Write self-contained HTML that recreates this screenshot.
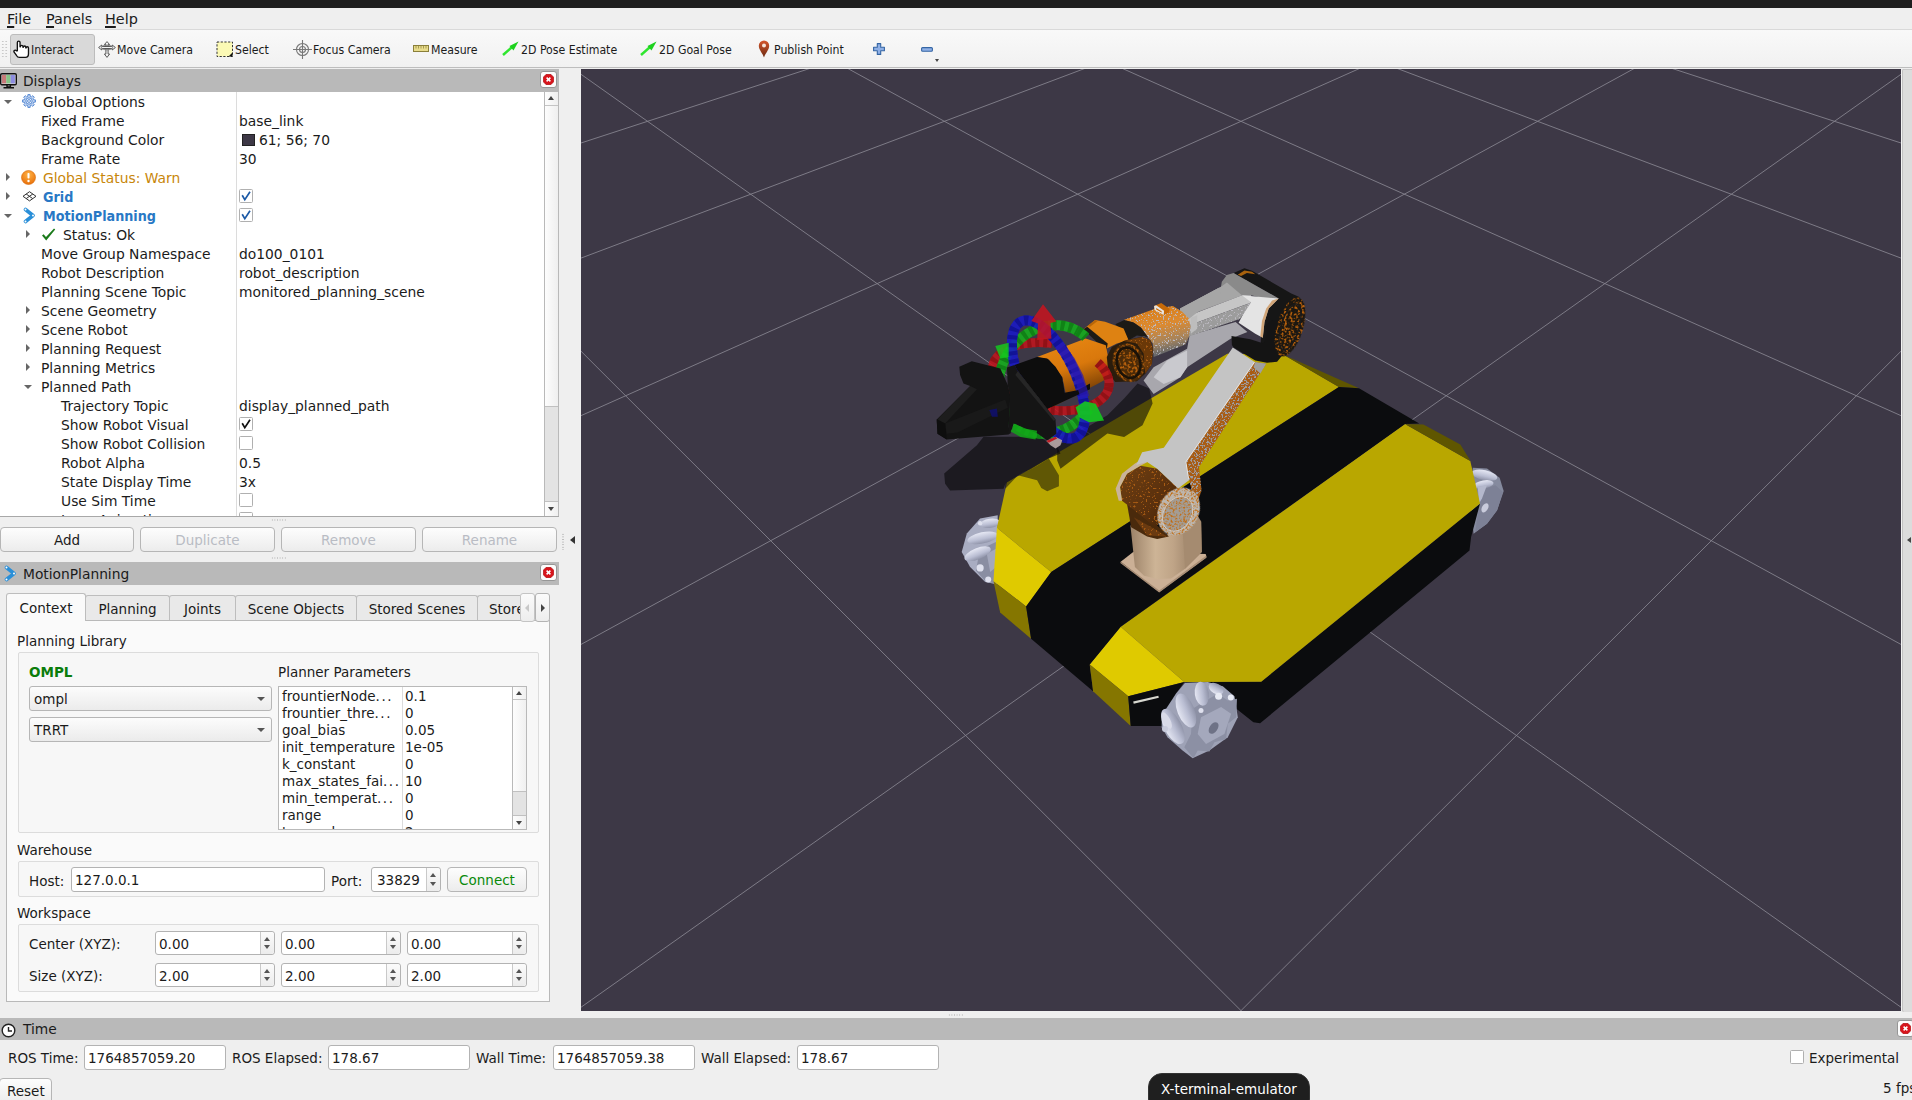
<!DOCTYPE html>
<html lang="en">
<head>
<meta charset="utf-8">
<title>RViz</title>
<style>
*{box-sizing:border-box;margin:0;padding:0}
html,body{width:1912px;height:1100px;overflow:hidden;background:#efefef}
body{position:relative;font-family:"DejaVu Sans","Liberation Sans",sans-serif;font-size:13.5px;color:#1b1b1b;line-height:19px}
.abs{position:absolute}
body>.t{margin-top:1px}
.t{position:absolute;white-space:nowrap;line-height:19px;height:19px}
#topbar{left:0;top:0;width:1912px;height:8px;background:#1f1f1f}
#menubar{left:0;top:8px;width:1912px;height:22px;background:#efefef;border-bottom:1px solid #d9d9d9}
#menubar .t{font-size:14.4px;top:1px;line-height:20px;height:20px}
#menubar u{text-decoration:underline;text-underline-offset:1.500px;text-decoration-thickness:1.700px}
#toolbar{left:0;top:30px;width:1912px;height:38px;background:linear-gradient(#f9f9f9,#f1f1f1);border-bottom:1px solid #bdbdbd}
#toolbar .t{font-family:"DejaVu Sans Condensed","Liberation Sans",sans-serif;font-size:12.2px;top:11px;line-height:19px}
#toolbar svg{position:absolute}
.tbtn{position:absolute;left:10px;top:4px;width:85px;height:31px;background:#d9d9d9;border:1px solid #bcbcbc;border-radius:3px}
.titlebar{position:absolute;background:#b9b9b9;height:23px}
.titlebar .t{top:3px;font-size:13.8px}
.closebtn{position:absolute;width:17px;height:17px;background:#fcfcfc;border:1px solid #969696;border-radius:3px}
.closebtn svg{position:absolute;left:2px;top:2px}
#tree{left:0;top:92px;width:544px;height:424px;background:#fff;overflow:hidden}
#tree .t{font-size:13.85px}
#treeborder{left:0;top:516px;width:559px;height:1px;background:#a8a8a8}
.coldiv{position:absolute;left:236px;top:0;width:1px;height:424px;background:#dcdcdc}
.row{position:absolute;left:0;width:544px;height:19px}
.cb{position:absolute;left:239px;width:14px;height:14px;border:1px solid #b0b0b0;border-radius:1.5px;background:#fff}
.cb svg{position:absolute;left:0;top:0}
.blue{color:#2878c5;font-weight:bold;font-family:"DejaVu Sans Condensed","Liberation Sans",sans-serif;font-size:14.2px!important}
.warn{color:#c8860a}
.vsb{position:absolute;background:linear-gradient(90deg,#fdfdfd,#efefef);border-left:1px solid #b9b9b9;border-right:1px solid #b9b9b9}
.btn{position:absolute;height:25px;border:1px solid #b6b6b6;border-radius:4px;background:linear-gradient(#fdfdfd,#ececec);text-align:center;font-size:13.5px;line-height:25px}
.btn.dis{color:#b9bcc4}
.tab{position:absolute;top:595px;height:25px;border:1px solid #bdbdbd;border-bottom:none;border-radius:3px 3px 0 0;background:#e9e9e9;font-size:13.5px;line-height:26px;text-align:center;white-space:nowrap;overflow:hidden}
.tab.act{top:593px;height:28px;background:#fafafa;line-height:28px;z-index:2}
.gbox{position:absolute;border:1px solid #dcdcdc;border-radius:2px;background:#f7f7f7}
.inp{position:absolute;background:#fff;border:1px solid #b3b3b3;border-radius:3px;font-size:13.5px;line-height:22px;padding:1px 0 0 3px;white-space:nowrap;overflow:hidden}
.combo{position:absolute;border:1px solid #b6b6b6;border-radius:3px;background:linear-gradient(#fcfcfc,#ebebeb);font-size:13.5px;line-height:22px;padding:1px 0 0 4px}
.combo:after{content:"";position:absolute;right:6px;top:10px;border:4px solid transparent;border-top:4px solid #555;border-bottom:none}
.spinbtn{position:absolute;right:0;top:0;width:14px;height:100%;border-left:1px solid #c9c9c9;background:linear-gradient(#fbfbfb,#ececec);border-radius:0 3px 3px 0}
.spinbtn:before{content:"";position:absolute;left:3px;top:5px;border:3.5px solid transparent;border-bottom:4px solid #555;border-top:none}
.spinbtn:after{content:"";position:absolute;left:3px;bottom:5px;border:3.5px solid transparent;border-top:4px solid #555;border-bottom:none}
.green{color:#0a8a0a}
#view{left:581px;top:69px;width:1320px;height:942px;background:#3d3846;overflow:hidden}
</style>
</head>
<body>
<div id="topbar" class="abs"></div>
<div id="menubar" class="abs">
  <span class="t" style="left:7px"><u>F</u>ile</span>
  <span class="t" style="left:46px"><u>P</u>anels</span>
  <span class="t" style="left:105px"><u>H</u>elp</span>
</div>
<div id="toolbar" class="abs">
  <div class="abs" style="left:1px;top:10px;width:7px;height:18px;background-image:radial-gradient(#c9c9c9 0.8px,transparent 1px);background-size:3.500px 3px"></div>
  <div class="tbtn"></div>
  <!-- hand icon -->
  <svg style="left:12.500px;top:9.500px" width="19.500" height="18.400" viewBox="0 0 18 17"><path d="M4 10V2.300a1.250 1.250 0 0 1 2.500 0V6.200h.3a1.200 1.200 0 0 1 2.400 0v.5h.3a1.150 1.150 0 0 1 2.300 0v.6h.3a1.100 1.100 0 0 1 2.200 0V12.600q0 3.400-2.800 3.400H5.900q-1.700 0-2.700-1.700L1 11.300q-.6-1.300.5-1.800 1-.4 1.700.6z" fill="#fff" stroke="#111" stroke-width="1.250" stroke-linejoin="round"/></svg>
  <span class="t" style="left:31px">Interact</span>
  <!-- move camera icon -->
  <svg style="left:98px;top:11px" width="18" height="17" viewBox="0 0 18 17"><g fill="#f4f4f4" stroke="#4a4a4a" stroke-width=".9" stroke-linejoin="round"><path d="M9 .600L11.600 3.600H10.100V13H11.600L9 16.400 6.400 13H7.900V3.600H6.400Z"/><path d="M.600 6.500L3.800 4V5.500H14.200V4L17.400 6.500 14.200 9V7.500H3.800V9Z"/><ellipse cx="9" cy="6.500" rx="5.600" ry="2.300" fill="none" stroke="#777"/></g></svg>
  <span class="t" style="left:117px">Move Camera</span>
  <!-- select icon -->
  <svg style="left:216px;top:11px" width="18" height="17" viewBox="0 0 18 17"><rect x="1" y="1" width="15.500" height="14.500" fill="#fbf9b5" stroke="#333" stroke-width="1" stroke-dasharray="2.200 1.500"/><path d="M16.500 11.500v4h-4z" fill="#111"/></svg>
  <span class="t" style="left:235px">Select</span>
  <!-- focus camera icon -->
  <svg style="left:293px;top:10px" width="19" height="19" viewBox="0 0 19 19"><g fill="none" stroke="#777" stroke-width="1.100"><circle cx="9.500" cy="9.500" r="6"/><circle cx="9.500" cy="9.500" r="3"/><path d="M9.500 0v19M0 9.500h19"/></g></svg>
  <span class="t" style="left:313px">Focus Camera</span>
  <!-- measure icon -->
  <svg style="left:413px;top:15px" width="16" height="8" viewBox="0 0 16 8"><rect x=".5" y=".5" width="15" height="6" fill="#e8dc8c" stroke="#8a7f3a"/><path d="M3 1v2.500M5.500 1v2.500M8 1v2.500M10.500 1v2.500M13 1v2.500" stroke="#8a7f3a" stroke-width=".7"/></svg>
  <span class="t" style="left:431px">Measure</span>
  <!-- 2D pose estimate -->
  <svg style="left:502px;top:11px" width="17" height="15" viewBox="0 0 17 15"><path d="M1 14L9.500 6.500" stroke="#2ee62e" stroke-width="2.400"/><path d="M16.500 0.500L7.500 5l4 4.500z" fill="#1dd11d"/></svg>
  <span class="t" style="left:521px">2D Pose Estimate</span>
  <svg style="left:640px;top:11px" width="17" height="15" viewBox="0 0 17 15"><path d="M1 14L9.500 6.500" stroke="#2ee62e" stroke-width="2.400"/><path d="M16.500 0.500L7.500 5l4 4.500z" fill="#1dd11d"/></svg>
  <span class="t" style="left:659px">2D Goal Pose</span>
  <!-- pin -->
  <svg style="left:758px;top:10px" width="12" height="18" viewBox="0 0 12 18"><defs><linearGradient id="pg" x1="0" y1="0" x2="0" y2="1"><stop offset="0" stop-color="#d4562c"/><stop offset="1" stop-color="#6b2a12"/></linearGradient></defs><path d="M6 17.500C4.500 13 .8 10 .8 5.800a5.200 5.200 0 0 1 10.400 0C11.200 10 7.500 13 6 17.500z" fill="url(#pg)"/><circle cx="6" cy="5.500" r="2" fill="#f6e6dc"/></svg>
  <span class="t" style="left:774px">Publish Point</span>
  <!-- plus / minus -->
  <svg style="left:873px;top:13px" width="12" height="12" viewBox="0 0 12 12"><path d="M4.300 .600h3.400v3.700h3.700v3.400H7.700v3.700H4.300V7.700H.600V4.300h3.700z" fill="#8fb0e6" stroke="#3465a4" stroke-width="1.100" stroke-linejoin="round"/></svg>
  <svg style="left:921px;top:17px" width="12" height="5" viewBox="0 0 12 5"><rect x=".600" y=".600" width="10.800" height="3.600" rx="1" fill="#8fb0e6" stroke="#3465a4" stroke-width="1.100"/></svg>
  <div class="abs" style="left:935px;top:29px;border:2.500px solid transparent;border-top:3px solid #444;border-bottom:none"></div>
</div>

<!-- Displays panel -->
<div class="titlebar" style="left:0;top:69px;width:559px">
  <svg class="abs" style="left:0;top:4px" width="18" height="16" viewBox="0 0 18 16"><rect x=".7" y=".7" width="15.600" height="11" rx="1.200" fill="#ddd" stroke="#111" stroke-width="1.400"/><rect x="2" y="2" width="4.300" height="8.400" fill="#c87a7a"/><rect x="6.300" y="2" width="4.300" height="8.400" fill="#86c486"/><rect x="10.600" y="2" width="4.300" height="8.400" fill="#8d8de0"/><path d="M7 12v2h3.400v-2M3.500 14.700h10.500" stroke="#111" stroke-width="1.400" fill="none"/></svg>
  <span class="t" style="left:23px">Displays</span>
  <div class="closebtn" style="left:540px;top:2px"><svg width="11" height="11" viewBox="0 0 11 11"><path d="M3.200 .3h4.600l2.900 2.900v4.600l-2.900 2.900H3.200L.3 7.800V3.200z" fill="#d8141c" stroke="#a40000" stroke-width=".6"/><path d="M3.600 3.600l3.800 3.800M7.400 3.600L3.600 7.400" stroke="#fff" stroke-width="1.500"/></svg></div>
</div>
<div id="tree" class="abs">
<div class="coldiv"></div>
<div class="row" style="top:0px"><div class="abs" style="left:4px;top:8px;border:4px solid transparent;border-top:4.500px solid #666;border-bottom:none"></div><svg class="abs" style="left:22px;top:2px" width="14" height="14" viewBox="0 0 14 14"><path d="M13.40 5.88 L13.40 8.12 L11.76 8.14 L11.18 9.56 L12.32 10.74 L10.74 12.32 L9.56 11.18 L8.14 11.76 L8.12 13.40 L5.88 13.40 L5.86 11.76 L4.44 11.18 L3.26 12.32 L1.68 10.74 L2.82 9.56 L2.24 8.14 L0.60 8.12 L0.60 5.88 L2.24 5.86 L2.82 4.44 L1.68 3.26 L3.26 1.68 L4.44 2.82 L5.86 2.24 L5.88 0.60 L8.12 0.60 L8.14 2.24 L9.56 2.82 L10.74 1.68 L12.32 3.26 L11.18 4.44 L11.76 5.86Z" fill="#c3d6f3" stroke="#4a80cf" stroke-width="0.9" stroke-linejoin="round"/><circle cx="7" cy="7" r="3.200" fill="#eaf1fb" stroke="#4a80cf" stroke-width="0.9"/><circle cx="7" cy="7" r="1.400" fill="#fff" stroke="#4a80cf" stroke-width="0.9"/></svg><span class="t" style="left:43px;top:1px">Global Options</span></div>
<div class="row" style="top:19px"><span class="t" style="left:41px;top:1px">Fixed Frame</span><span class="t" style="left:239px;top:1px">base_link</span></div>
<div class="row" style="top:38px"><span class="t" style="left:41px;top:1px">Background Color</span><div class="abs" style="left:242px;top:4px;width:13px;height:12px;background:#3d3846;border:1px solid #222"></div><span class="t" style="left:259px;top:1px">61; 56; 70</span></div>
<div class="row" style="top:57px"><span class="t" style="left:41px;top:1px">Frame Rate</span><span class="t" style="left:239px;top:1px">30</span></div>
<div class="row" style="top:76px"><div class="abs" style="left:6px;top:5px;border:4px solid transparent;border-left:4.500px solid #666;border-right:none"></div><svg class="abs" style="left:21px;top:2px" width="15" height="15" viewBox="0 0 15 15"><defs><radialGradient id="wg" cx=".5" cy=".3" r=".7"><stop offset="0" stop-color="#ffb347"/><stop offset="1" stop-color="#e8700a"/></radialGradient></defs><circle cx="7.500" cy="7.500" r="7" fill="url(#wg)" stroke="#d86a08" stroke-width=".6"/><rect x="6.500" y="3" width="2" height="5.500" rx=".8" fill="#fff"/><circle cx="7.500" cy="11" r="1.200" fill="#fff"/></svg><span class="t warn" style="left:43px;top:1px">Global Status: Warn</span></div>
<div class="row" style="top:95px"><div class="abs" style="left:6px;top:5px;border:4px solid transparent;border-left:4.500px solid #666;border-right:none"></div><svg class="abs" style="left:22px;top:4px" width="15" height="11" viewBox="0 0 15 11"><g fill="none" stroke="#333" stroke-width="1"><path d="M7.500 .7l6.500 4.600-6.500 4.600L1 5.300z"/><path d="M4.200 3l6.500 4.600M10.800 3L4.200 7.600"/></g></svg><span class="t blue" style="left:43px;top:1px">Grid</span><div class="cb" style="top:2px"><svg width="12" height="12" viewBox="0 0 12 12"><path d="M2.200 5.200L4.800 9.600 10 1.800" fill="none" stroke="#1c5aa6" stroke-width="1.700"/></svg></div></div>
<div class="row" style="top:114px"><div class="abs" style="left:4px;top:8px;border:4px solid transparent;border-top:4.500px solid #666;border-bottom:none"></div><svg class="abs" style="left:23px;top:1px" width="13" height="17" viewBox="0 0 13 17"><path d="M2.500 2.500L10 8.500 2.500 14.500" fill="none" stroke="#2a8fd8" stroke-width="3.600" stroke-linejoin="round" stroke-linecap="round"/><circle cx="2.500" cy="2.500" r="1" fill="#fff"/><circle cx="10" cy="8.500" r="1" fill="#fff"/><circle cx="2.500" cy="14.500" r="1" fill="#fff"/></svg><span class="t blue" style="left:43px;top:1px">MotionPlanning</span><div class="cb" style="top:2px"><svg width="12" height="12" viewBox="0 0 12 12"><path d="M2.200 5.200L4.800 9.600 10 1.800" fill="none" stroke="#1c5aa6" stroke-width="1.700"/></svg></div></div>
<div class="row" style="top:133px"><div class="abs" style="left:26px;top:5px;border:4px solid transparent;border-left:4.500px solid #666;border-right:none"></div><svg class="abs" style="left:41px;top:3px" width="15" height="13" viewBox="0 0 15 13"><path d="M1 7.500l1.600-1.300L5 9 13 .6l1.200 1L5.200 12.600z" fill="#1a7a1a"/></svg><span class="t" style="left:63px;top:1px">Status: Ok</span></div>
<div class="row" style="top:152px"><span class="t" style="left:41px;top:1px">Move Group Namespace</span><span class="t" style="left:239px;top:1px">do100_0101</span></div>
<div class="row" style="top:171px"><span class="t" style="left:41px;top:1px">Robot Description</span><span class="t" style="left:239px;top:1px">robot_description</span></div>
<div class="row" style="top:190px"><span class="t" style="left:41px;top:1px">Planning Scene Topic</span><span class="t" style="left:239px;top:1px">monitored_planning_scene</span></div>
<div class="row" style="top:209px"><div class="abs" style="left:26px;top:5px;border:4px solid transparent;border-left:4.500px solid #666;border-right:none"></div><span class="t" style="left:41px;top:1px">Scene Geometry</span></div>
<div class="row" style="top:228px"><div class="abs" style="left:26px;top:5px;border:4px solid transparent;border-left:4.500px solid #666;border-right:none"></div><span class="t" style="left:41px;top:1px">Scene Robot</span></div>
<div class="row" style="top:247px"><div class="abs" style="left:26px;top:5px;border:4px solid transparent;border-left:4.500px solid #666;border-right:none"></div><span class="t" style="left:41px;top:1px">Planning Request</span></div>
<div class="row" style="top:266px"><div class="abs" style="left:26px;top:5px;border:4px solid transparent;border-left:4.500px solid #666;border-right:none"></div><span class="t" style="left:41px;top:1px">Planning Metrics</span></div>
<div class="row" style="top:285px"><div class="abs" style="left:24px;top:8px;border:4px solid transparent;border-top:4.500px solid #666;border-bottom:none"></div><span class="t" style="left:41px;top:1px">Planned Path</span></div>
<div class="row" style="top:304px"><span class="t" style="left:61px;top:1px">Trajectory Topic</span><span class="t" style="left:239px;top:1px">display_planned_path</span></div>
<div class="row" style="top:323px"><span class="t" style="left:61px;top:1px">Show Robot Visual</span><div class="cb" style="top:2px"><svg width="12" height="12" viewBox="0 0 12 12"><path d="M2.200 5.200L4.800 9.600 10 1.800" fill="none" stroke="#111" stroke-width="1.700"/></svg></div></div>
<div class="row" style="top:342px"><span class="t" style="left:61px;top:1px">Show Robot Collision</span><div class="cb" style="top:2px"></div></div>
<div class="row" style="top:361px"><span class="t" style="left:61px;top:1px">Robot Alpha</span><span class="t" style="left:239px;top:1px">0.5</span></div>
<div class="row" style="top:380px"><span class="t" style="left:61px;top:1px">State Display Time</span><span class="t" style="left:239px;top:1px">3x</span></div>
<div class="row" style="top:399px"><span class="t" style="left:61px;top:1px">Use Sim Time</span><div class="cb" style="top:2px"></div></div>
<div class="row" style="top:418px"><span class="t" style="left:61px;top:1px">Loop Animation</span><div class="cb" style="top:2px"></div></div>
</div>
<!-- tree scrollbar -->
<div class="vsb" style="left:544px;top:92px;width:15px;height:424px">
  <div class="abs" style="left:0;top:0;width:13px;height:14px;border-bottom:1px solid #c4c4c4"></div>
  <div class="abs" style="left:3px;top:4px;border:3.500px solid transparent;border-bottom:4px solid #444;border-top:none"></div>
  <div class="abs" style="left:0;top:314px;width:13px;height:96px;background:#e3e3e3;border-top:1px solid #c0c0c0;border-bottom:1px solid #c0c0c0"></div>
  <div class="abs" style="left:3px;top:415px;border:3.500px solid transparent;border-top:4px solid #444;border-bottom:none"></div>
</div>
<div id="treeborder" class="abs"></div>
<div class="abs" style="left:271px;top:519px;width:16px;height:2px;background-image:radial-gradient(#bdbdbd .6px,transparent .8px);background-size:2.600px 2px"></div>
<div class="btn" style="left:0;top:527px;width:134px">Add</div>
<div class="btn dis" style="left:140px;top:527px;width:135px">Duplicate</div>
<div class="btn dis" style="left:281px;top:527px;width:135px">Remove</div>
<div class="btn dis" style="left:422px;top:527px;width:135px">Rename</div>
<div class="abs" style="left:562px;top:533px;width:2px;height:17px;background-image:radial-gradient(#bdbdbd .6px,transparent .8px);background-size:2px 2.600px"></div>
<div class="abs" style="left:570px;top:536px;border:4px solid transparent;border-right:5px solid #333;border-left:none"></div>
<div class="abs" style="left:271px;top:557px;width:16px;height:2px;background-image:radial-gradient(#bdbdbd .6px,transparent .8px);background-size:2.600px 2px"></div>

<!-- MotionPlanning panel -->
<div class="titlebar" style="left:0;top:562px;width:559px;height:23px">
  <svg class="abs" style="left:4px;top:3px" width="13" height="17" viewBox="0 0 13 17"><path d="M2.500 2.500L10 8.500 2.500 14.500" fill="none" stroke="#2a8fd8" stroke-width="3.600" stroke-linejoin="round" stroke-linecap="round"/><circle cx="2.500" cy="2.500" r="1" fill="#fff"/><circle cx="10" cy="8.500" r="1" fill="#fff"/><circle cx="2.500" cy="14.500" r="1" fill="#fff"/></svg>
  <span class="t" style="left:23px">MotionPlanning</span>
  <div class="closebtn" style="left:540px;top:2px"><svg width="11" height="11" viewBox="0 0 11 11"><path d="M3.200 .3h4.600l2.900 2.900v4.600l-2.900 2.900H3.200L.3 7.800V3.200z" fill="#d8141c" stroke="#a40000" stroke-width=".6"/><path d="M3.600 3.600l3.800 3.800M7.400 3.600L3.600 7.400" stroke="#fff" stroke-width="1.500"/></svg></div>
</div>
<!-- tab pane -->
<div class="abs" style="left:6px;top:620px;width:544px;height:382px;background:#fafafa;border:1px solid #b9b9b9"></div>
<div class="tab act" style="left:6px;width:80px">Context</div>
<div class="tab" style="left:85px;width:85px">Planning</div>
<div class="tab" style="left:169px;width:67px">Joints</div>
<div class="tab" style="left:235px;width:122px">Scene Objects</div>
<div class="tab" style="left:356px;width:122px">Stored Scenes</div>
<div class="tab" style="left:477px;width:43px;text-align:left;padding-left:11px;border-right:none;border-radius:3px 0 0 0">Stored States</div>
<div class="abs" style="left:520px;top:593px;width:15px;height:29px;background:linear-gradient(#fbfbfb,#ededed);border:1px solid #c4c4c4;border-radius:3px;z-index:3"><div class="abs" style="left:4px;top:10px;border:4px solid transparent;border-right:4.500px solid #c8c8c8;border-left:none"></div></div>
<div class="abs" style="left:535px;top:593px;width:15px;height:29px;background:linear-gradient(#fbfbfb,#ededed);border:1px solid #b4b4b4;border-radius:3px;z-index:3"><div class="abs" style="left:5px;top:10px;border:4px solid transparent;border-left:4.500px solid #444;border-right:none"></div></div>

<span class="t" style="left:17px;top:631px">Planning Library</span>
<div class="gbox" style="left:18px;top:652px;width:521px;height:181px"></div>
<span class="t green" style="left:29px;top:662px;font-weight:bold;color:#0b7d0b">OMPL</span>
<div class="combo" style="left:29px;top:686px;width:243px;height:25px">ompl</div>
<div class="combo" style="left:29px;top:717px;width:243px;height:25px">TRRT</div>
<span class="t" style="left:278px;top:662px">Planner Parameters</span>
<div class="abs" id="plist" style="left:278px;top:686px;width:249px;height:144px;background:#fff;border:1px solid #b9b9b9;overflow:hidden;font-size:13.5px">
  <div class="abs" style="left:123px;top:0;width:1px;height:144px;background:#dcdcdc"></div>
  <span class="t" style="left:3px;top:0px">frountierNode<i style="font-style:normal;letter-spacing:1.600px">...</i></span><span class="t" style="left:126px;top:0px">0.1</span>
  <span class="t" style="left:3px;top:17px">frountier_thre<i style="font-style:normal;letter-spacing:1.600px">...</i></span><span class="t" style="left:126px;top:17px">0</span>
  <span class="t" style="left:3px;top:34px">goal_bias</span><span class="t" style="left:126px;top:34px">0.05</span>
  <span class="t" style="left:3px;top:51px">init_temperature</span><span class="t" style="left:126px;top:51px">1e-05</span>
  <span class="t" style="left:3px;top:68px">k_constant</span><span class="t" style="left:126px;top:68px">0</span>
  <span class="t" style="left:3px;top:85px">max_states_fai<i style="font-style:normal;letter-spacing:1.600px">...</i></span><span class="t" style="left:126px;top:85px">10</span>
  <span class="t" style="left:3px;top:102px">min_temperat<i style="font-style:normal;letter-spacing:1.600px">...</i></span><span class="t" style="left:126px;top:102px">0</span>
  <span class="t" style="left:3px;top:119px">range</span><span class="t" style="left:126px;top:119px">0</span>
  <span class="t" style="left:3px;top:136px">temp_change<i style="font-style:normal;letter-spacing:1.600px">...</i></span><span class="t" style="left:126px;top:136px">2</span>
  <div class="vsb" style="left:233px;top:0;width:15px;height:142px;border-right:none">
    <div class="abs" style="left:0;top:0;width:14px;height:13px;border-bottom:1px solid #c4c4c4"></div>
    <div class="abs" style="left:3px;top:4px;border:3.500px solid transparent;border-bottom:4px solid #444;border-top:none"></div>
    <div class="abs" style="left:0;top:104px;width:14px;height:25px;background:#e3e3e3;border-top:1px solid #c0c0c0;border-bottom:1px solid #c0c0c0"></div>
    <div class="abs" style="left:3px;top:134px;border:3.500px solid transparent;border-top:4px solid #444;border-bottom:none"></div>
  </div>
</div>

<span class="t" style="left:17px;top:840px">Warehouse</span>
<div class="gbox" style="left:18px;top:861px;width:521px;height:36px"></div>
<span class="t" style="left:29px;top:871px">Host:</span>
<div class="inp" style="left:71px;top:867px;width:254px;height:25px">127.0.0.1</div>
<span class="t" style="left:331px;top:871px">Port:</span>
<div class="inp" style="left:371px;top:867px;width:70px;height:25px;padding-left:5px">33829<div class="spinbtn"></div></div>
<div class="btn green" style="left:447px;top:867px;width:80px">Connect</div>

<span class="t" style="left:17px;top:903px">Workspace</span>
<div class="gbox" style="left:18px;top:924px;width:521px;height:68px"></div>
<span class="t" style="left:29px;top:934px">Center (XYZ):</span>
<div class="inp" style="left:155px;top:931px;width:120px;height:24px">0.00<div class="spinbtn"></div></div>
<div class="inp" style="left:281px;top:931px;width:120px;height:24px">0.00<div class="spinbtn"></div></div>
<div class="inp" style="left:407px;top:931px;width:120px;height:24px">0.00<div class="spinbtn"></div></div>
<span class="t" style="left:29px;top:966px">Size (XYZ):</span>
<div class="inp" style="left:155px;top:963px;width:120px;height:24px">2.00<div class="spinbtn"></div></div>
<div class="inp" style="left:281px;top:963px;width:120px;height:24px">2.00<div class="spinbtn"></div></div>
<div class="inp" style="left:407px;top:963px;width:120px;height:24px">2.00<div class="spinbtn"></div></div>

<!-- right strip -->
<div class="abs" style="left:1901px;top:69px;width:11px;height:943px;background:#dcdcdc;border-left:1px solid #f3f3f3;box-shadow:inset 1px 0 0 #c2c2c2,inset 0 1px 0 #c8c8c8;border-radius:2px 0 0 2px"></div>
<div class="abs" style="left:1907px;top:537px;border:3.500px solid transparent;border-right:4.500px solid #444;border-left:none"></div>
<div class="abs" style="left:948px;top:1014px;width:16px;height:2px;background-image:radial-gradient(#bdbdbd .6px,transparent .8px);background-size:2.600px 2px"></div>

<!-- Time panel -->
<div class="titlebar" style="left:0;top:1018px;width:1912px;height:22px">
  <svg class="abs" style="left:1px;top:5px" width="15" height="15" viewBox="0 0 15 15"><circle cx="7.500" cy="7.500" r="6.300" fill="#fff" stroke="#222" stroke-width="1.400"/><path d="M7.500 4v4h3.500" fill="none" stroke="#222" stroke-width="1.400"/></svg>
  <span class="t" style="left:23px;top:2px">Time</span>
  <div class="closebtn" style="left:1897px;top:2px"><svg width="11" height="11" viewBox="0 0 11 11"><path d="M3.200 .3h4.600l2.900 2.900v4.600l-2.900 2.900H3.200L.3 7.800V3.200z" fill="#d8141c" stroke="#a40000" stroke-width=".6"/><path d="M3.600 3.600l3.800 3.800M7.400 3.600L3.600 7.400" stroke="#fff" stroke-width="1.500"/></svg></div>
</div>
<span class="t" style="left:8px;top:1048px">ROS Time:</span>
<div class="inp" style="left:84px;top:1045px;width:142px;height:25px">1764857059.20</div>
<span class="t" style="left:232px;top:1048px">ROS Elapsed:</span>
<div class="inp" style="left:328px;top:1045px;width:142px;height:25px">178.67</div>
<span class="t" style="left:476px;top:1048px">Wall Time:</span>
<div class="inp" style="left:553px;top:1045px;width:142px;height:25px">1764857059.38</div>
<span class="t" style="left:701px;top:1048px">Wall Elapsed:</span>
<div class="inp" style="left:797px;top:1045px;width:142px;height:25px">178.67</div>
<div class="cb" style="left:1790px;top:1050px"></div>
<span class="t" style="left:1809px;top:1048px">Experimental</span>
<div class="btn" style="left:-1px;top:1078px;width:53px;height:26px;text-align:left;padding-left:7px">Reset</div>
<span class="t" style="left:1883px;top:1078px">5 fps</span>
<div class="abs" style="left:1148px;top:1073px;width:162px;height:40px;background:#1f1f1f;border-radius:14px;border:1px solid #333"></div>
<span class="t" style="left:1161px;top:1079px;color:#fff">X-terminal-emulator</span>
<div id="view" class="abs"><svg width="1320" height="943" viewBox="581 69 1320 943" style="position:absolute;left:0;top:0">
<g stroke="#85828d" stroke-width="0.9">
<line x1="1241.0" y1="-134.1" x2="-1110.5" y2="540.7"/>
<line x1="1241.0" y1="-134.1" x2="3592.5" y2="540.7"/>
<line x1="1342.5" y1="-105.0" x2="-1238.0" y2="735.4"/>
<line x1="1139.5" y1="-105.0" x2="3720.0" y2="735.4"/>
<line x1="1457.7" y1="-71.9" x2="-1418.1" y2="1010.6"/>
<line x1="1024.3" y1="-71.9" x2="3900.1" y2="1010.6"/>
<line x1="1589.6" y1="-34.1" x2="-1692.2" y2="1429.3"/>
<line x1="892.4" y1="-34.1" x2="4174.2" y2="1429.3"/>
<line x1="1741.9" y1="9.6" x2="-1409.1" y2="1732.7"/>
<line x1="740.1" y1="9.6" x2="3891.1" y2="1732.7"/>
<line x1="1920.1" y1="60.8" x2="-445.4" y2="1732.7"/>
<line x1="561.9" y1="60.8" x2="2927.4" y2="1732.7"/>
<line x1="2131.1" y1="121.3" x2="518.3" y2="1732.7"/>
<line x1="350.9" y1="121.3" x2="1963.7" y2="1732.7"/>
<line x1="2385.0" y1="194.2" x2="1481.9" y2="1732.7"/>
<line x1="97.0" y1="194.2" x2="1000.1" y2="1732.7"/>
<line x1="2696.4" y1="283.6" x2="2445.6" y2="1732.7"/>
<line x1="-214.4" y1="283.6" x2="36.4" y2="1732.7"/>
<line x1="3087.3" y1="395.8" x2="3409.2" y2="1732.7"/>
<line x1="-605.3" y1="395.8" x2="-927.2" y2="1732.7"/>
<line x1="3592.5" y1="540.7" x2="4372.9" y2="1732.7"/>
<line x1="-1110.5" y1="540.7" x2="-1890.9" y2="1732.7"/>
</g>
<defs><linearGradient id="rollh" x1="0" y1="0" x2="0" y2="1"><stop offset="0" stop-color="#e6e8f4"/><stop offset=".6" stop-color="#babed3"/><stop offset="1" stop-color="#8f93a8"/></linearGradient></defs>
<polygon points="961.7,552.0 966.8,533.6 980.1,518.6 997.7,515.3 997.7,584.6 985.2,582.1 970.1,567.1" fill="#a9adc2"/>
<polygon points="985.2,547.0 996.0,542.0 996.0,583.8 985.2,581.3 976.0,570.4 978.5,557.1" fill="#8a8ea2"/>
<polygon points="986.8,553.7 996.0,548.7 996.0,567.1 990.2,572.1" fill="#a4a8bc"/>
<ellipse cx="990.2" cy="523.3" rx="10" ry="4.6" fill="url(#rollh)" transform="rotate(-8 990.2 523.3)"/>
<ellipse cx="982.6" cy="537.8" rx="15.5" ry="5.6" fill="url(#rollh)" transform="rotate(-12 982.6 537.8)"/>
<ellipse cx="977.6" cy="553.7" rx="14" ry="5.6" fill="url(#rollh)" transform="rotate(-22 977.6 553.7)"/>
<ellipse cx="980.1" cy="567.9" rx="3.6" ry="3.6" fill="#dfe1ee" transform="rotate(0 980.1 567.9)"/>
<ellipse cx="988.2" cy="579.6" rx="3" ry="3" fill="#dfe1ee" transform="rotate(0 988.2 579.6)"/>
<ellipse cx="980.1" cy="523.3" rx="2.2" ry="2.2" fill="#dfe1ee" transform="rotate(0 980.1 523.3)"/>
<polygon points="1472.8,467.7 1487.0,468.5 1499.6,477.7 1503.7,491.1 1497.1,510.3 1487.0,523.7 1473.6,533.7 1470.3,503.6" fill="#858a9e"/>
<ellipse cx="1484.5" cy="475.2" rx="13" ry="5" fill="url(#rollh)" transform="rotate(12 1484.5 475.2)"/>
<ellipse cx="1483.7" cy="484.4" rx="10" ry="4" fill="url(#rollh)" transform="rotate(-10 1483.7 484.4)"/>
<polygon points="1480.3,490.2 1495.4,485.2 1502.9,491.9 1497.1,510.3 1487.0,523.7 1475.3,532.0 1478.7,507.0" fill="#7d8196"/>
<ellipse cx="1485.0" cy="507.8" rx="3" ry="5" fill="#c9ccdc" transform="rotate(30 1485.0 507.8)"/>
<polygon points="1477.8,486.9 1487.0,485.2 1482.0,498.6 1479.0,503.6" fill="#b4b8cc"/>
<polygon points="1480.0,503.6 1471.1,537.0 1469.5,550.4 1260.1,723.2 1253.4,722.3 1236.7,709.0 1215.0,700.0 1184.3,682.0 1261.2,681.7" fill="#0b0c0e"/>
<polygon points="996.9,527.8 1006.9,482.6 1227.3,353.8 1283.5,354.7 1338.9,386.9 1051.2,572.1" fill="#b9a700"/>
<polygon points="1120.7,626.8 1405.0,424.1 1470.3,461.0 1480.0,503.6 1261.2,681.7 1184.3,682.0" fill="#b9a700"/>
<polygon points="1283.5,354.7 1359.0,388.2 1338.9,386.9" fill="#5f5600"/>
<polygon points="1405.0,424.1 1423.4,424.6 1460.3,444.6 1469.8,459.7 1470.3,461.0" fill="#5f5600"/>
<polygon points="996.9,527.8 1051.2,572.1 1026.1,606.4 993.5,581.3" fill="#dfca00"/>
<polygon points="1120.7,626.8 1184.3,682.0 1128.2,696.2 1089.7,664.4" fill="#dfca00"/>
<polygon points="993.5,581.3 1026.1,606.4 1031.1,638.8 1000.2,612.6 999.4,608.9" fill="#857600"/>
<polygon points="1338.9,386.9 1359.0,388.2 1419.2,423.4 1405.0,424.1 1120.7,626.8 1089.7,664.4 1093.1,691.2 1031.1,638.8 1026.1,606.4 1051.2,572.1" fill="#0b0c0e"/>
<polygon points="1089.7,664.4 1128.2,696.2 1130.7,725.9 1093.1,691.2" fill="#857600"/>
<polygon points="1128.2,696.2 1184.3,682.0 1175.9,693.7 1163.3,725.9 1130.7,725.9" fill="#0b0c0e"/>
<polygon points="1133.2,701.6 1158.3,695.7 1158.8,697.7 1133.7,703.8" fill="#d8d8d0"/>
<defs><linearGradient id="roll" x1="0" y1="0" x2="1" y2="0"><stop offset="0" stop-color="#e4e6f2"/><stop offset=".55" stop-color="#b9bdd2"/><stop offset="1" stop-color="#8f93a8"/></linearGradient></defs>
<polygon points="1175.9,693.7 1185.1,682.8 1207.7,682.0 1222.8,686.2 1234.5,696.2 1237.8,717.2 1227.8,737.2 1209.4,750.6 1192.6,758.2 1182.6,750.6 1167.5,737.2 1161.7,727.2 1161.7,715.5" fill="#9ea2b6"/>
<polygon points="1192.6,708.8 1206.0,700.4 1217.7,693.7 1227.8,700.4 1237.0,698.7 1236.2,717.2 1227.8,723.8 1226.1,738.9 1214.4,742.3 1209.4,751.5 1197.7,750.6 1193.5,758.2 1184.3,747.3 1191.0,733.9" fill="#8c90a4"/>
<polygon points="1201.0,717.2 1221.1,707.1 1231.1,713.8 1224.4,733.9 1206.0,743.9 1197.7,733.9" fill="#a4a8bc"/>
<ellipse cx="1213.6" cy="728.0" rx="4" ry="6.5" fill="#6e7286" transform="rotate(35 1213.6 728.0)"/>
<ellipse cx="1172.9" cy="726.4" rx="8.5" ry="19.5" fill="url(#roll)" transform="rotate(-28 1172.9 726.4)"/>
<ellipse cx="1185.9" cy="710.5" rx="8.5" ry="18" fill="url(#roll)" transform="rotate(-22 1185.9 710.5)"/>
<ellipse cx="1201.8" cy="693.7" rx="7" ry="12" fill="url(#roll)" transform="rotate(-8 1201.8 693.7)"/>
<ellipse cx="1216.1" cy="688.7" rx="5" ry="8" fill="url(#roll)" transform="rotate(-60 1216.1 688.7)"/>
<ellipse cx="1166.7" cy="720.5" rx="3.5" ry="9" fill="#d9dbe8" transform="rotate(-28 1166.7 720.5)"/>
<ellipse cx="1218.6" cy="696.2" rx="3.5" ry="3.5" fill="#e8eaf4" transform="rotate(0 1218.6 696.2)"/>
<ellipse cx="1230.8" cy="697.4" rx="3" ry="3" fill="#e8eaf4" transform="rotate(0 1230.8 697.4)"/>
<ellipse cx="1201.0" cy="710.5" rx="2.5" ry="2.5" fill="#dfe1ee" transform="rotate(0 1201.0 710.5)"/>
<ellipse cx="1165.0" cy="728.9" rx="3" ry="3" fill="#c9ccdc" transform="rotate(0 1165.0 728.9)"/>
<defs><linearGradient id="beige" x1="0" y1="0" x2="1" y2="0"><stop offset="0" stop-color="#9c8268"/><stop offset=".35" stop-color="#cdb496"/><stop offset=".6" stop-color="#bfa487"/><stop offset="1" stop-color="#8d745c"/></linearGradient><linearGradient id="brown" x1="0" y1="0" x2="1" y2="1"><stop offset="0" stop-color="#6e3f12"/><stop offset=".6" stop-color="#5a300d"/><stop offset="1" stop-color="#3f2208"/></linearGradient><linearGradient id="orng" x1="0" y1="0" x2=".35" y2="1"><stop offset="0" stop-color="#ea8a14"/><stop offset=".5" stop-color="#d9780c"/><stop offset=".8" stop-color="#8f4c06"/><stop offset="1" stop-color="#4a2804"/></linearGradient><linearGradient id="orng2" x1="0" y1="0" x2=".3" y2="1"><stop offset="0" stop-color="#d97a10"/><stop offset=".5" stop-color="#dc8a30"/><stop offset=".8" stop-color="#a8845a"/><stop offset="1" stop-color="#6a6a6a"/></linearGradient><filter id="fspk" x="0" y="0" width="1" height="1" color-interpolation-filters="sRGB"><feTurbulence type="fractalNoise" baseFrequency="0.55" numOctaves="2" seed="3" result="n"/><feColorMatrix in="n" type="matrix" values="0 0 0 0 0.62  0 0 0 0 0.62  0 0 0 0 0.64  0 0 0 10 -5.200" result="d"/><feComposite in="d" in2="SourceGraphic" operator="in" result="dd"/><feMerge><feMergeNode in="SourceGraphic"/><feMergeNode in="dd"/></feMerge></filter><filter id="fspo" x="0" y="0" width="1" height="1" color-interpolation-filters="sRGB"><feTurbulence type="fractalNoise" baseFrequency="0.6" numOctaves="2" seed="7" result="n"/><feColorMatrix in="n" type="matrix" values="0 0 0 0 0.76  0 0 0 0 0.42  0 0 0 0 0.06  0 0 0 10 -5.400" result="d"/><feComposite in="d" in2="SourceGraphic" operator="in" result="dd"/><feMerge><feMergeNode in="SourceGraphic"/><feMergeNode in="dd"/></feMerge></filter><filter id="fspw" x="0" y="0" width="1" height="1" color-interpolation-filters="sRGB"><feTurbulence type="fractalNoise" baseFrequency="0.6" numOctaves="2" seed="11" result="n"/><feColorMatrix in="n" type="matrix" values="0 0 0 0 0.74  0 0 0 0 0.73  0 0 0 0 0.76  0 0 0 10 -5.900" result="d"/><feComposite in="d" in2="SourceGraphic" operator="in" result="dd"/><feMerge><feMergeNode in="SourceGraphic"/><feMergeNode in="dd"/></feMerge></filter><filter id="fspb" x="0" y="0" width="1" height="1" color-interpolation-filters="sRGB"><feTurbulence type="fractalNoise" baseFrequency="0.5" numOctaves="2" seed="5" result="n"/><feColorMatrix in="n" type="matrix" values="0 0 0 0 0.66  0 0 0 0 0.36  0 0 0 0 0.08  0 0 0 10 -6.100" result="d"/><feComposite in="d" in2="SourceGraphic" operator="in" result="dd"/><feMerge><feMergeNode in="SourceGraphic"/><feMergeNode in="dd"/></feMerge></filter><filter id="fspc" x="0" y="0" width="1" height="1" color-interpolation-filters="sRGB"><feTurbulence type="fractalNoise" baseFrequency="0.45" numOctaves="2" seed="9" result="n"/><feColorMatrix in="n" type="matrix" values="0 0 0 0 0.72  0 0 0 0 0.38  0 0 0 0 0.05  0 0 0 12 -6.300" result="d"/><feComposite in="d" in2="SourceGraphic" operator="in" result="dd"/><feMerge><feMergeNode in="SourceGraphic"/><feMergeNode in="dd"/></feMerge></filter></defs>
<polygon points="944.2,473.6 976.9,445.2 983.6,436.8 1038.8,436.8 1057.2,446.9 1060.5,453.6 1048.8,458.6 1030.4,469.5 1022.1,472.8 1005.3,483.7 1003.6,488.7 950.1,490.4 945.1,483.7" fill="#08080a" fill-opacity="0.62"/>
<polygon points="1005.3,483.7 1022.1,472.8 1030.4,469.5 1037.9,465.3 1048.8,458.6 1058.9,475.3 1058.9,486.2 1047.2,491.2 1041.3,487.9 1037.1,480.3 1017.9,475.3 1005.3,488.7" fill="#08080a" fill-opacity="0.5"/>
<polygon points="1057.2,447.0 1067.2,438.7 1107.4,415.2 1124.1,398.5 1137.5,383.4 1149.2,388.5 1152.6,403.5 1142.5,425.3 1124.1,437.0 1107.4,433.6 1060.5,468.8 1057.2,460.4" fill="#0a0a0c" fill-opacity="0.6"/>
<polygon points="1189.6,335.4 1235.6,322.0 1247.4,332.0 1230.6,338.7 1187.1,367.2 1180.4,377.2 1153.6,393.9 1143.6,380.5 1153.6,367.2 1187.1,348.7" fill="#b4b4b8" fill-opacity="0.9"/>
<polygon points="1167.0,360.5 1187.1,350.4 1187.1,367.2 1180.4,377.2 1163.7,383.9 1153.6,377.2" fill="#cfcfd3" fill-opacity="0.85"/>
<polygon points="1120.7,561.7 1133.2,552.0 1205.7,554.0 1206.4,557.3 1159.2,592.1" fill="#cbb096"/>
<polygon points="1120.7,561.7 1159.2,590.5 1206.4,555.6 1206.4,557.7 1159.2,592.5 1120.3,563.0" fill="#a88e76"/>
<polygon points="1130.4,525.2 1134.9,567.0 1144.1,575.7 1157.5,579.1 1170.9,578.4 1185.1,568.7 1201.8,552.0 1201.3,521.8 1194.3,510.1 1177.6,530.2 1160.8,536.9 1144.1,533.6" fill="url(#beige)"/>
<polygon points="1182.6,530.2 1194.3,511.8 1201.0,521.8 1201.8,552.0 1185.1,568.7" fill="#a58b70"/>
<polygon points="1127.0,503.8 1155.5,523.9 1168.9,536.5 1157.2,539.0 1147.1,536.5 1131.2,527.3" fill="#4a2a0c"/>
<polygon points="1133.7,517.2 1157.2,530.6 1167.2,536.5 1147.1,535.6" fill="#6a3a10" filter="url(#fspb)"/>
<polygon points="1120.0,487.1 1127.0,473.7 1140.4,465.7 1157.2,468.7 1178.6,488.5 1164.7,503.8 1158.0,523.9 1155.5,527.6 1133.7,509.7 1122.0,500.8" fill="url(#brown)" filter="url(#fspb)"/>
<polygon points="1134.6,463.7 1142.9,458.7 1147.1,462.3 1140.4,465.7 1127.0,473.7 1120.0,487.1 1122.0,500.8 1118.7,500.8 1115.6,488.8 1122.0,473.7" fill="#c9b39a"/>
<polygon points="1232.8,347.5 1255.0,362.2 1186.4,462.0 1189.3,480.1 1178.1,488.5 1157.2,468.7 1147.1,462.0 1136.2,465.0 1142.1,452.3 1163.8,447.8" fill="#c4c4c4"/>
<polyline points="1255.0,362.2 1186.4,462.0 1189.0,478.7" fill="none" stroke="#ececec" stroke-width="1.600"/>
<polygon points="1255.0,362.2 1266.3,363.4 1199.0,467.0 1201.5,490.5 1195.6,507.2 1189.3,480.1 1186.4,462.0" fill="#a85c14" filter="url(#fspk)"/>
<polygon points="1255.0,362.2 1266.3,363.4 1260.4,373.5 1253.7,367.6" fill="#a0a0a0"/>
<ellipse cx="1178.6" cy="511.4" rx="20" ry="25" fill="#bdb6ae" transform="rotate(30 1178.6 511.4)" filter="url(#fspo)"/>
<ellipse cx="1177.6" cy="513.9" rx="14" ry="18.500" fill="#a39d96" transform="rotate(30 1177.6 513.9)" filter="url(#fspo)"/>
<ellipse cx="1177.6" cy="513.9" rx="14" ry="18.500" fill="none" stroke="#d6cfc6" stroke-width="0.8" transform="rotate(30 1177.6 513.9)"/>
<polygon points="1233.6,273.0 1244.4,268.2 1252.0,270.7 1291.3,293.5 1298.8,296.8 1303.4,303.5 1304.0,318.6 1298.8,335.3 1291.3,347.0 1260.3,347.0 1261.6,330.3 1264.9,315.3 1271.6,301.9 1278.7,298.5 1238.6,275.9" fill="#161616"/>
<polygon points="1231.5,335.9 1250.3,339.2 1263.7,343.4 1267.0,335.1 1266.2,325.0 1272.1,320.0 1302.2,320.0 1303.0,328.4 1297.2,336.7 1283.8,353.5 1277.1,361.8 1267.0,362.8 1255.3,360.6 1233.6,347.6 1231.9,345.1" fill="#141414"/>
<ellipse cx="1290.0" cy="327.0" rx="13" ry="30.500" fill="#1c1710" transform="rotate(17 1290.0 327.0)" filter="url(#fspc)"/>
<ellipse cx="1290.0" cy="327.0" rx="9" ry="24" fill="none" stroke="#1a1a1a" stroke-width="1.500" transform="rotate(17 1290.0 327.0)"/>
<polygon points="1237.7,274.7 1244.4,270.5 1252.0,271.7 1255.3,274.2 1246.9,273.0 1241.1,275.9" fill="#a8620e"/>
<polygon points="1226.9,275.1 1233.6,273.0 1278.7,298.5 1272.1,300.2 1251.1,295.2 1241.9,295.2 1180.0,318.6 1180.0,308.6 1221.0,286.8 1221.8,281.8" fill="#8a8a8a"/>
<polygon points="1180.0,308.6 1221.0,286.8 1226.9,282.6 1241.9,295.2 1180.0,318.6" fill="#a6a6a6"/>
<polygon points="1180.0,319.0 1241.9,295.3 1251.1,295.2 1252.0,302.3 1190.0,324.9 1180.0,328.6" fill="#c6c6c6"/>
<polygon points="1190.0,324.9 1252.0,302.3 1243.6,313.6 1240.3,318.8 1190.9,335.8 1180.0,339.5 1180.0,328.6" fill="#9c9c9c" filter="url(#fspw)"/>
<polygon points="1241.9,295.2 1278.7,298.5 1268.7,308.6 1264.5,321.9 1262.8,337.8 1255.3,333.7 1238.6,322.8 1243.6,313.6 1251.1,302.3" fill="#e4e4e4"/>
<polygon points="1272.1,300.6 1278.7,298.5 1268.7,308.6 1264.5,321.9 1262.8,337.8 1260.3,336.6 1262.0,321.1 1266.2,308.6" fill="#c98a4a" fill-opacity="0.7"/>
<polygon points="1179.9,308.9 1218.9,287.7 1220.6,293.8 1190.5,317.8 1187.1,320.3" fill="#a6a6a6"/>
<polygon points="1190.5,317.8 1197.2,315.3 1197.2,328.7 1190.8,333.7" fill="#bdbdbd"/>
<polygon points="1123.6,320.1 1153.7,309.2 1172.9,305.9 1182.1,311.8 1188.8,318.5 1190.5,326.8 1188.8,336.9 1185.5,344.4 1153.7,356.9 1152.8,343.6 1147.8,336.9 1141.1,327.7 1133.6,322.6" fill="url(#orng2)" filter="url(#fspw)"/>
<polygon points="1154.1,305.9 1161.2,303.0 1169.6,308.8 1169.2,312.2 1163.7,315.1 1154.5,310.1" fill="#c86a08"/>
<polygon points="1154.1,306.1 1156.2,305.2 1164.1,310.8 1163.7,315.1 1154.5,310.1" fill="#e8e4e0"/>
<polygon points="1156.2,308.0 1161.6,311.3 1161.6,312.6 1156.2,309.4" fill="#c86a08"/>
<polygon points="1115.2,324.3 1124.4,320.1 1133.6,322.6 1141.1,327.7 1147.8,336.9 1136.9,335.6 1128.6,340.2 1121.9,330.2" fill="#1c1a16"/>
<polygon points="1083.4,329.3 1095.1,320.1 1105.1,321.8 1123.6,328.5 1128.6,340.2 1116.9,343.6 1106.8,348.6 1086.7,330.2" fill="#de8212"/>
<polygon points="1083.4,329.3 1087.2,326.7 1107.7,343.6 1106.8,349.0 1103.5,348.6" fill="#1c1a16"/>
<polygon points="1087.6,326.0 1095.1,320.1 1097.6,321.0 1090.1,326.8" fill="#b86608"/>
<polygon points="1037.2,356.9 1085.7,338.5 1105.8,345.2 1109.1,362.0 1110.0,377.0 1097.4,384.1 1047.2,409.7 1065.6,392.9 1062.3,377.0 1048.9,359.5" fill="url(#orng)"/>
<polygon points="1106.8,356.9 1111.8,346.9 1123.6,341.0 1128.6,339.4 1142.0,336.9 1150.3,340.2 1152.8,348.6 1152.0,363.6 1145.3,373.7 1136.9,381.2 1115.2,382.0 1108.5,373.7" fill="#2a1c0c"/>
<polygon points="1123.6,341.0 1142.0,336.9 1150.3,340.2 1152.8,348.6 1152.0,363.6 1145.3,373.7 1143.6,353.6 1136.9,343.6" fill="#6a3808" filter="url(#fspb)"/>
<ellipse cx="1128.6" cy="362.8" rx="15.500" ry="19.500" fill="#4a2a08" transform="rotate(-18 1128.6 362.8)" filter="url(#fspc)"/>
<ellipse cx="1128.6" cy="362.8" rx="11.500" ry="15.500" fill="none" stroke="#1a1208" stroke-width="2.600" transform="rotate(-18 1128.6 362.8)"/>
<polyline points="1108.8,386.9 1108.6,387.8 1108.4,388.6 1108.2,389.5 1107.9,390.3 1107.6,391.1 1107.2,391.9 1106.8,392.7 1106.3,393.5 1105.9,394.2 1105.3,395.0 1104.8,395.8 1104.2,396.5 1103.6,397.2 1102.9,397.9 1102.2,398.6 1101.4,399.3 1100.7,399.9 1099.9,400.6 1099.0,401.2 1098.2,401.8 1097.2,402.4 1096.3,403.0 1095.3,403.6 1094.3,404.1 1093.3,404.6 1092.2,405.1 1091.2,405.6 1090.0,406.1 1088.9,406.5 1087.7,406.9 1086.5,407.3 1085.3,407.7 1084.1,408.1 1082.8,408.4 1081.5,408.7 1080.2,409.0 1078.9,409.3 1077.5,409.5 1076.2,409.8 1074.8,410.0 1073.4,410.1 1072.0,410.3 1070.5,410.4 1069.1,410.6 1067.6,410.6 1066.2,410.7 1064.7,410.8 1063.2,410.8 1061.7,410.8 1060.2,410.7 1058.7,410.7 1057.2,410.6 1055.7,410.5 1054.1,410.4 1052.6,410.3 1051.1,410.1 1049.5,409.9 1048.0,409.7 1046.5,409.5 1045.0,409.2 1043.5,408.9 1041.9,408.6 1040.4,408.3 1038.9,407.9 1037.4,407.6 1036.0,407.2 1034.5,406.8 1033.0,406.4 1031.6,405.9 1030.1,405.4 1028.7,405.0 1027.3,404.4 1025.9,403.9 1024.5,403.4 1023.2,402.8 1021.8,402.2 1020.5,401.6 1019.2,401.0 1017.9,400.4 1016.7,399.7 1015.5,399.1 1014.2,398.4 1013.1,397.7 1011.9,397.0 1010.8,396.2 1009.7,395.5 1008.6,394.8 1007.6,394.0 1006.5,393.2 1005.6,392.4 1004.6,391.6 1003.7,390.8 1002.8,390.0 1001.9,389.2 1001.1,388.4 1000.3,387.5 999.6,386.7 998.8,385.8 998.2,384.9 997.5,384.1 996.9,383.2 996.3,382.3 995.8,381.4 995.3,380.6 994.8,379.7 994.4,378.8 994.0,377.9 993.7,377.0 993.4,376.1 993.1,375.2 992.9,374.3 992.7,373.4 992.5,372.5 992.4,371.7 992.3,370.8 992.3,369.9 992.3,369.0 992.4,368.2 992.5,367.3 992.6,366.5 992.8,365.6 993.0,364.8 993.2,363.9 993.5,363.1 993.8,362.3 994.2,361.5 994.6,360.7 995.1,359.9 995.5,359.2 996.1,358.4 996.6,357.6 997.2,356.9 997.8,356.2 998.5,355.5 999.2,354.8 1000.0,354.1 1000.7,353.5 1001.5,352.8 1002.4,352.2 1003.2,351.6 1004.2,351.0 1005.1,350.4 1006.1,349.8 1007.1,349.3 1008.1,348.8 1009.2,348.3 1010.2,347.8 1011.4,347.3 1012.5,346.9 1013.7,346.5 1014.9,346.1 1016.1,345.7 1017.3,345.3 1018.6,345.0 1019.9,344.7 1021.2,344.4 1022.5,344.1 1023.9,343.9 1025.2,343.6 1026.6,343.4 1028.0,343.3 1029.4,343.1 1030.9,343.0 1032.3,342.8 1033.8,342.8 1035.2,342.7 1036.7,342.6 1038.2,342.6 1039.7,342.6 1041.2,342.7 1042.7,342.7 1044.2,342.8 1045.7,342.9 1047.3,343.0 1048.8,343.1 1050.3,343.3 1051.9,343.5" fill="none" stroke="#c4141c" stroke-width="9" stroke-opacity="0.85"/>
<polyline points="1108.8,386.9 1108.6,387.8 1108.4,388.6 1108.2,389.5 1107.9,390.3 1107.6,391.1 1107.2,391.9 1106.8,392.7 1106.3,393.5 1105.9,394.2 1105.3,395.0 1104.8,395.8 1104.2,396.5 1103.6,397.2 1102.9,397.9 1102.2,398.6 1101.4,399.3 1100.7,399.9 1099.9,400.6 1099.0,401.2 1098.2,401.8 1097.2,402.4 1096.3,403.0 1095.3,403.6 1094.3,404.1 1093.3,404.6 1092.2,405.1 1091.2,405.6 1090.0,406.1 1088.9,406.5 1087.7,406.9 1086.5,407.3 1085.3,407.7 1084.1,408.1 1082.8,408.4 1081.5,408.7 1080.2,409.0 1078.9,409.3 1077.5,409.5 1076.2,409.8 1074.8,410.0 1073.4,410.1 1072.0,410.3 1070.5,410.4 1069.1,410.6 1067.6,410.6 1066.2,410.7 1064.7,410.8 1063.2,410.8 1061.7,410.8 1060.2,410.7 1058.7,410.7 1057.2,410.6 1055.7,410.5 1054.1,410.4 1052.6,410.3 1051.1,410.1 1049.5,409.9 1048.0,409.7 1046.5,409.5 1045.0,409.2 1043.5,408.9 1041.9,408.6 1040.4,408.3 1038.9,407.9 1037.4,407.6 1036.0,407.2 1034.5,406.8 1033.0,406.4 1031.6,405.9 1030.1,405.4 1028.7,405.0 1027.3,404.4 1025.9,403.9 1024.5,403.4 1023.2,402.8 1021.8,402.2 1020.5,401.6 1019.2,401.0 1017.9,400.4 1016.7,399.7 1015.5,399.1 1014.2,398.4 1013.1,397.7 1011.9,397.0 1010.8,396.2 1009.7,395.5 1008.6,394.8 1007.6,394.0 1006.5,393.2 1005.6,392.4 1004.6,391.6 1003.7,390.8 1002.8,390.0 1001.9,389.2 1001.1,388.4 1000.3,387.5 999.6,386.7 998.8,385.8 998.2,384.9 997.5,384.1 996.9,383.2 996.3,382.3 995.8,381.4 995.3,380.6 994.8,379.7 994.4,378.8 994.0,377.9 993.7,377.0 993.4,376.1 993.1,375.2 992.9,374.3 992.7,373.4 992.5,372.5 992.4,371.7 992.3,370.8 992.3,369.9 992.3,369.0 992.4,368.2 992.5,367.3 992.6,366.5 992.8,365.6 993.0,364.8 993.2,363.9 993.5,363.1 993.8,362.3 994.2,361.5 994.6,360.7 995.1,359.9 995.5,359.2 996.1,358.4 996.6,357.6 997.2,356.9 997.8,356.2 998.5,355.5 999.2,354.8 1000.0,354.1 1000.7,353.5 1001.5,352.8 1002.4,352.2 1003.2,351.6 1004.2,351.0 1005.1,350.4 1006.1,349.8 1007.1,349.3 1008.1,348.8 1009.2,348.3 1010.2,347.8 1011.4,347.3 1012.5,346.9 1013.7,346.5 1014.9,346.1 1016.1,345.7 1017.3,345.3 1018.6,345.0 1019.9,344.7 1021.2,344.4 1022.5,344.1 1023.9,343.9 1025.2,343.6 1026.6,343.4 1028.0,343.3 1029.4,343.1 1030.9,343.0 1032.3,342.8 1033.8,342.8 1035.2,342.7 1036.7,342.6 1038.2,342.6 1039.7,342.6 1041.2,342.7 1042.7,342.7 1044.2,342.8 1045.7,342.9 1047.3,343.0 1048.8,343.1 1050.3,343.3 1051.9,343.5" fill="none" stroke="#8c1014" stroke-width="9" stroke-opacity="0.85" stroke-dasharray="4 4"/>
<polyline points="1097.7,362.6 1098.6,363.4 1099.5,364.2 1100.3,365.0 1101.1,365.9 1101.8,366.7 1102.6,367.6 1103.2,368.5 1103.9,369.3 1104.5,370.2 1105.1,371.1 1105.6,372.0 1106.1,372.8 1106.6,373.7 1107.0,374.6 1107.4,375.5 1107.7,376.4 1108.0,377.3 1108.3,378.2 1108.5,379.1 1108.7,380.0 1108.9,380.9 1109.0,381.7 1109.1,382.6 1109.1,383.5 1109.1,384.4 1109.0,385.2 1108.9,386.1 1108.8,386.9" fill="none" stroke="#c4141c" stroke-width="9" stroke-opacity="0.85"/>
<polyline points="1097.7,362.6 1098.6,363.4 1099.5,364.2 1100.3,365.0 1101.1,365.9 1101.8,366.7 1102.6,367.6 1103.2,368.5 1103.9,369.3 1104.5,370.2 1105.1,371.1 1105.6,372.0 1106.1,372.8 1106.6,373.7 1107.0,374.6 1107.4,375.5 1107.7,376.4 1108.0,377.3 1108.3,378.2 1108.5,379.1 1108.7,380.0 1108.9,380.9 1109.0,381.7 1109.1,382.6 1109.1,383.5 1109.1,384.4 1109.0,385.2 1108.9,386.1 1108.8,386.9" fill="none" stroke="#8c1014" stroke-width="9" stroke-opacity="0.85" stroke-dasharray="4 4"/>
<polyline points="1077.5,331.0 1078.6,331.7 1079.7,332.4 1080.7,333.1 1081.8,333.8 1082.8,334.6 1083.8,335.4 1084.8,336.3 1085.7,337.2" fill="none" stroke="#14b41c" stroke-width="10" stroke-opacity="0.85"/>
<polyline points="1077.5,331.0 1078.6,331.7 1079.7,332.4 1080.7,333.1 1081.8,333.8 1082.8,334.6 1083.8,335.4 1084.8,336.3 1085.7,337.2" fill="none" stroke="#0f7c14" stroke-width="10" stroke-opacity="0.85" stroke-dasharray="4 4"/>
<polyline points="1088.8,408.9 1087.9,410.1 1087.0,411.3 1086.1,412.4 1085.2,413.5 1084.2,414.6 1083.2,415.7 1082.2,416.8 1081.2,417.8 1080.2,418.8 1079.1,419.8 1078.0,420.7 1076.9,421.6 1075.7,422.5 1074.6,423.3 1073.4,424.2 1072.2,425.0 1071.1,425.7 1069.8,426.5 1068.6,427.2 1067.4,427.8 1066.1,428.5 1064.9,429.1 1063.6,429.6 1062.3,430.2 1061.0,430.7 1059.7,431.1 1058.4,431.5 1057.1,431.9 1055.8,432.3 1054.4,432.6 1053.1,432.9 1051.8,433.1 1050.5,433.3 1049.1,433.5 1047.8,433.7 1046.5,433.8 1045.1,433.8 1043.8,433.8 1042.5,433.8 1041.2,433.8 1039.9,433.7 1038.6,433.6 1037.3,433.4 1036.0,433.2 1034.7,433.0 1033.4,432.7 1032.2,432.4 1030.9,432.0 1029.7,431.7 1028.5,431.2 1027.3,430.8 1026.1,430.3 1024.9,429.8 1023.8,429.2 1022.6,428.6 1021.5,428.0 1020.4,427.3 1019.3,426.6 1018.3,425.9 1017.2,425.2 1016.2,424.4 1015.2,423.6 1014.2,422.7 1013.3,421.8 1012.4,420.9 1011.5,420.0 1010.6,419.0 1009.8,418.1 1008.9,417.0 1008.2,416.0 1007.4,414.9 1006.7,413.8 1006.0,412.7 1005.3,411.6 1004.6,410.4 1004.0,409.2 1003.5,408.0 1002.9,406.8 1002.4,405.6 1001.9,404.3 1001.5,403.1 1001.0,401.8 1000.6,400.5 1000.3,399.1 1000.0,397.8 999.7,396.5 999.4,395.1 999.2,393.7 999.0,392.4 998.9,391.0 998.8,389.6 998.7,388.2 998.7,386.8 998.7,385.4 998.7,384.0 998.8,382.5 998.8,381.1 999.0,379.7 999.1,378.3 999.3,376.8 999.6,375.4 999.8,374.0 1000.2,372.6 1000.5,371.2 1000.9,369.8 1001.3,368.4 1001.7,367.0 1002.2,365.6 1002.7,364.2 1003.2,362.9 1003.8,361.5 1004.4,360.2 1005.0,358.9 1005.7,357.6 1006.3,356.3 1007.1,355.0 1007.8,353.7 1008.6,352.5 1009.4,351.3 1010.2,350.1 1011.1,348.9 1012.0,347.7 1012.9,346.6 1013.8,345.5 1014.8,344.4 1015.8,343.3 1016.8,342.2 1017.8,341.2 1018.8,340.2 1019.9,339.2 1021.0,338.3 1022.1,337.4 1023.3,336.5 1024.4,335.7 1025.6,334.8 1026.8,334.0 1027.9,333.3 1029.2,332.5 1030.4,331.8 1031.6,331.2 1032.9,330.5 1034.1,329.9 1035.4,329.4 1036.7,328.8 1038.0,328.3 1039.3,327.9 1040.6,327.5 1041.9,327.1 1043.2,326.7 1044.6,326.4 1045.9,326.1 1047.2,325.9 1048.5,325.7 1049.9,325.5 1051.2,325.3 1052.5,325.2 1053.9,325.2 1055.2,325.2 1056.5,325.2 1057.8,325.2 1059.1,325.3 1060.4,325.4 1061.7,325.6 1063.0,325.8 1064.3,326.0 1065.6,326.3 1066.8,326.6 1068.1,327.0 1069.3,327.3 1070.5,327.8 1071.7,328.2 1072.9,328.7 1074.1,329.2 1075.2,329.8 1076.4,330.4 1077.5,331.0" fill="none" stroke="#14b41c" stroke-width="10" stroke-opacity="0.85"/>
<polyline points="1088.8,408.9 1087.9,410.1 1087.0,411.3 1086.1,412.4 1085.2,413.5 1084.2,414.6 1083.2,415.7 1082.2,416.8 1081.2,417.8 1080.2,418.8 1079.1,419.8 1078.0,420.7 1076.9,421.6 1075.7,422.5 1074.6,423.3 1073.4,424.2 1072.2,425.0 1071.1,425.7 1069.8,426.5 1068.6,427.2 1067.4,427.8 1066.1,428.5 1064.9,429.1 1063.6,429.6 1062.3,430.2 1061.0,430.7 1059.7,431.1 1058.4,431.5 1057.1,431.9 1055.8,432.3 1054.4,432.6 1053.1,432.9 1051.8,433.1 1050.5,433.3 1049.1,433.5 1047.8,433.7 1046.5,433.8 1045.1,433.8 1043.8,433.8 1042.5,433.8 1041.2,433.8 1039.9,433.7 1038.6,433.6 1037.3,433.4 1036.0,433.2 1034.7,433.0 1033.4,432.7 1032.2,432.4 1030.9,432.0 1029.7,431.7 1028.5,431.2 1027.3,430.8 1026.1,430.3 1024.9,429.8 1023.8,429.2 1022.6,428.6 1021.5,428.0 1020.4,427.3 1019.3,426.6 1018.3,425.9 1017.2,425.2 1016.2,424.4 1015.2,423.6 1014.2,422.7 1013.3,421.8 1012.4,420.9 1011.5,420.0 1010.6,419.0 1009.8,418.1 1008.9,417.0 1008.2,416.0 1007.4,414.9 1006.7,413.8 1006.0,412.7 1005.3,411.6 1004.6,410.4 1004.0,409.2 1003.5,408.0 1002.9,406.8 1002.4,405.6 1001.9,404.3 1001.5,403.1 1001.0,401.8 1000.6,400.5 1000.3,399.1 1000.0,397.8 999.7,396.5 999.4,395.1 999.2,393.7 999.0,392.4 998.9,391.0 998.8,389.6 998.7,388.2 998.7,386.8 998.7,385.4 998.7,384.0 998.8,382.5 998.8,381.1 999.0,379.7 999.1,378.3 999.3,376.8 999.6,375.4 999.8,374.0 1000.2,372.6 1000.5,371.2 1000.9,369.8 1001.3,368.4 1001.7,367.0 1002.2,365.6 1002.7,364.2 1003.2,362.9 1003.8,361.5 1004.4,360.2 1005.0,358.9 1005.7,357.6 1006.3,356.3 1007.1,355.0 1007.8,353.7 1008.6,352.5 1009.4,351.3 1010.2,350.1 1011.1,348.9 1012.0,347.7 1012.9,346.6 1013.8,345.5 1014.8,344.4 1015.8,343.3 1016.8,342.2 1017.8,341.2 1018.8,340.2 1019.9,339.2 1021.0,338.3 1022.1,337.4 1023.3,336.5 1024.4,335.7 1025.6,334.8 1026.8,334.0 1027.9,333.3 1029.2,332.5 1030.4,331.8 1031.6,331.2 1032.9,330.5 1034.1,329.9 1035.4,329.4 1036.7,328.8 1038.0,328.3 1039.3,327.9 1040.6,327.5 1041.9,327.1 1043.2,326.7 1044.6,326.4 1045.9,326.1 1047.2,325.9 1048.5,325.7 1049.9,325.5 1051.2,325.3 1052.5,325.2 1053.9,325.2 1055.2,325.2 1056.5,325.2 1057.8,325.2 1059.1,325.3 1060.4,325.4 1061.7,325.6 1063.0,325.8 1064.3,326.0 1065.6,326.3 1066.8,326.6 1068.1,327.0 1069.3,327.3 1070.5,327.8 1071.7,328.2 1072.9,328.7 1074.1,329.2 1075.2,329.8 1076.4,330.4 1077.5,331.0" fill="none" stroke="#0f7c14" stroke-width="10" stroke-opacity="0.85" stroke-dasharray="4 4"/>
<polyline points="1075.4,437.5 1074.8,437.8 1074.1,438.0 1073.4,438.2 1072.7,438.4 1072.0,438.5 1071.3,438.6 1070.5,438.6 1069.8,438.6 1069.0,438.6 1068.2,438.5 1067.4,438.4 1066.6,438.2 1065.7,438.0 1064.9,437.7 1064.0,437.5 1063.2,437.1 1062.3,436.8 1061.4,436.4 1060.5,435.9 1059.6,435.4 1058.7,434.9 1057.8,434.4 1056.8,433.8 1055.9,433.1 1055.0,432.5 1054.0,431.8 1053.1,431.0 1052.1,430.2 1051.2,429.4 1050.2,428.6 1049.3,427.7 1048.3,426.8 1047.4,425.8 1046.4,424.9 1045.5,423.9 1044.5,422.8 1043.6,421.8 1042.6,420.7 1041.7,419.5 1040.7,418.4 1039.8,417.2 1038.9,416.0 1038.0,414.8 1037.0,413.5 1036.1,412.2 1035.2,410.9 1034.4,409.6 1033.5,408.3 1032.6,406.9 1031.8,405.5 1030.9,404.1 1030.1,402.7 1029.3,401.3 1028.5,399.8 1027.7,398.4 1026.9,396.9 1026.1,395.4 1025.4,393.9 1024.6,392.4 1023.9,390.9 1023.2,389.4 1022.5,387.9 1021.9,386.3 1021.2,384.8 1020.6,383.2 1020.0,381.7 1019.4,380.1 1018.8,378.6 1018.3,377.1 1017.8,375.5 1017.3,374.0 1016.8,372.4 1016.3,370.9 1015.9,369.4 1015.4,367.8 1015.0,366.3 1014.7,364.8 1014.3,363.3 1014.0,361.9 1013.7,360.4 1013.4,358.9 1013.1,357.5 1012.9,356.1 1012.7,354.6 1012.5,353.2 1012.4,351.9 1012.2,350.5 1012.1,349.2 1012.0,347.8 1012.0,346.6 1011.9,345.3 1011.9,344.0 1011.9,342.8 1012.0,341.6 1012.0,340.4 1012.1,339.3 1012.2,338.2 1012.4,337.1 1012.6,336.0 1012.7,335.0 1013.0,334.0 1013.2,333.0 1013.5,332.1 1013.7,331.2 1014.0,330.3 1014.4,329.4 1014.7,328.6 1015.1,327.9 1015.5,327.1 1015.9,326.4 1016.4,325.8 1016.9,325.1 1017.3,324.5 1017.9,324.0 1018.4,323.5 1018.9,323.0 1019.5,322.6 1020.1,322.2 1020.7,321.8 1021.4,321.5 1022.0,321.2 1022.7,321.0 1023.4,320.8 1024.1,320.6 1024.8,320.5 1025.5,320.4 1026.3,320.4 1027.0,320.4 1027.8,320.4 1028.6,320.5 1029.4,320.6 1030.2,320.8 1031.1,321.0 1031.9,321.3 1032.8,321.5 1033.6,321.9 1034.5,322.2 1035.4,322.6 1036.3,323.1 1037.2,323.6 1038.1,324.1 1039.0,324.6 1040.0,325.2 1040.9,325.9 1041.8,326.5 1042.8,327.2 1043.7,328.0 1044.7,328.8 1045.6,329.6 1046.6,330.4 1047.5,331.3 1048.5,332.2 1049.4,333.2 1050.4,334.1 1051.3,335.1 1052.3,336.2 1053.2,337.2 1054.2,338.3 1055.1,339.5 1056.1,340.6 1057.0,341.8 1057.9,343.0 1058.8,344.2 1059.8,345.5 1060.7,346.8 1061.6,348.1 1062.4,349.4 1063.3,350.7 1064.2,352.1 1065.0,353.5 1065.9,354.9 1066.7,356.3 1067.5,357.7 1068.3,359.2 1069.1,360.6 1069.9,362.1 1070.7,363.6 1071.4,365.1 1072.2,366.6 1072.9,368.1 1073.6,369.6 1074.3,371.1 1074.9,372.7 1075.6,374.2 1076.2,375.8 1076.8,377.3 1077.4,378.9 1078.0,380.4 1078.5,381.9 1079.0,383.5 1079.5,385.0 1080.0,386.6 1080.5,388.1 1080.9,389.6 1081.4,391.2 1081.8,392.7 1082.1,394.2 1082.5,395.7 1082.8,397.1 1083.1,398.6 1083.4,400.1 1083.7,401.5 1083.9,402.9 1084.1,404.4 1084.3,405.8 1084.4,407.1 1084.6,408.5 1084.7,409.8 1084.8,411.2 1084.8,412.4 1084.9,413.7 1084.9,415.0 1084.9,416.2 1084.8,417.4 1084.8,418.6 1084.7,419.7 1084.6,420.8 1084.4,421.9 1084.2,423.0 1084.1,424.0 1083.8,425.0 1083.6,426.0 1083.3,426.9 1083.1,427.8 1082.8,428.7 1082.4,429.6 1082.1,430.4 1081.7,431.1 1081.3,431.9 1080.9,432.6 1080.4,433.2 1079.9,433.9 1079.5,434.5 1078.9,435.0 1078.4,435.5 1077.9,436.0 1077.3,436.4 1076.7,436.8 1076.1,437.2 1075.4,437.5" fill="none" stroke="#1818cc" stroke-width="10" stroke-opacity="0.85"/>
<polyline points="1075.4,437.5 1074.8,437.8 1074.1,438.0 1073.4,438.2 1072.7,438.4 1072.0,438.5 1071.3,438.6 1070.5,438.6 1069.8,438.6 1069.0,438.6 1068.2,438.5 1067.4,438.4 1066.6,438.2 1065.7,438.0 1064.9,437.7 1064.0,437.5 1063.2,437.1 1062.3,436.8 1061.4,436.4 1060.5,435.9 1059.6,435.4 1058.7,434.9 1057.8,434.4 1056.8,433.8 1055.9,433.1 1055.0,432.5 1054.0,431.8 1053.1,431.0 1052.1,430.2 1051.2,429.4 1050.2,428.6 1049.3,427.7 1048.3,426.8 1047.4,425.8 1046.4,424.9 1045.5,423.9 1044.5,422.8 1043.6,421.8 1042.6,420.7 1041.7,419.5 1040.7,418.4 1039.8,417.2 1038.9,416.0 1038.0,414.8 1037.0,413.5 1036.1,412.2 1035.2,410.9 1034.4,409.6 1033.5,408.3 1032.6,406.9 1031.8,405.5 1030.9,404.1 1030.1,402.7 1029.3,401.3 1028.5,399.8 1027.7,398.4 1026.9,396.9 1026.1,395.4 1025.4,393.9 1024.6,392.4 1023.9,390.9 1023.2,389.4 1022.5,387.9 1021.9,386.3 1021.2,384.8 1020.6,383.2 1020.0,381.7 1019.4,380.1 1018.8,378.6 1018.3,377.1 1017.8,375.5 1017.3,374.0 1016.8,372.4 1016.3,370.9 1015.9,369.4 1015.4,367.8 1015.0,366.3 1014.7,364.8 1014.3,363.3 1014.0,361.9 1013.7,360.4 1013.4,358.9 1013.1,357.5 1012.9,356.1 1012.7,354.6 1012.5,353.2 1012.4,351.9 1012.2,350.5 1012.1,349.2 1012.0,347.8 1012.0,346.6 1011.9,345.3 1011.9,344.0 1011.9,342.8 1012.0,341.6 1012.0,340.4 1012.1,339.3 1012.2,338.2 1012.4,337.1 1012.6,336.0 1012.7,335.0 1013.0,334.0 1013.2,333.0 1013.5,332.1 1013.7,331.2 1014.0,330.3 1014.4,329.4 1014.7,328.6 1015.1,327.9 1015.5,327.1 1015.9,326.4 1016.4,325.8 1016.9,325.1 1017.3,324.5 1017.9,324.0 1018.4,323.5 1018.9,323.0 1019.5,322.6 1020.1,322.2 1020.7,321.8 1021.4,321.5 1022.0,321.2 1022.7,321.0 1023.4,320.8 1024.1,320.6 1024.8,320.5 1025.5,320.4 1026.3,320.4 1027.0,320.4 1027.8,320.4 1028.6,320.5 1029.4,320.6 1030.2,320.8 1031.1,321.0 1031.9,321.3 1032.8,321.5 1033.6,321.9 1034.5,322.2 1035.4,322.6 1036.3,323.1 1037.2,323.6 1038.1,324.1 1039.0,324.6 1040.0,325.2 1040.9,325.9 1041.8,326.5 1042.8,327.2 1043.7,328.0 1044.7,328.8 1045.6,329.6 1046.6,330.4 1047.5,331.3 1048.5,332.2 1049.4,333.2 1050.4,334.1 1051.3,335.1 1052.3,336.2 1053.2,337.2 1054.2,338.3 1055.1,339.5 1056.1,340.6 1057.0,341.8 1057.9,343.0 1058.8,344.2 1059.8,345.5 1060.7,346.8 1061.6,348.1 1062.4,349.4 1063.3,350.7 1064.2,352.1 1065.0,353.5 1065.9,354.9 1066.7,356.3 1067.5,357.7 1068.3,359.2 1069.1,360.6 1069.9,362.1 1070.7,363.6 1071.4,365.1 1072.2,366.6 1072.9,368.1 1073.6,369.6 1074.3,371.1 1074.9,372.7 1075.6,374.2 1076.2,375.8 1076.8,377.3 1077.4,378.9 1078.0,380.4 1078.5,381.9 1079.0,383.5 1079.5,385.0 1080.0,386.6 1080.5,388.1 1080.9,389.6 1081.4,391.2 1081.8,392.7 1082.1,394.2 1082.5,395.7 1082.8,397.1 1083.1,398.6 1083.4,400.1 1083.7,401.5 1083.9,402.9 1084.1,404.4 1084.3,405.8 1084.4,407.1 1084.6,408.5 1084.7,409.8 1084.8,411.2 1084.8,412.4 1084.9,413.7 1084.9,415.0 1084.9,416.2 1084.8,417.4 1084.8,418.6 1084.7,419.7 1084.6,420.8 1084.4,421.9 1084.2,423.0 1084.1,424.0 1083.8,425.0 1083.6,426.0 1083.3,426.9 1083.1,427.8 1082.8,428.7 1082.4,429.6 1082.1,430.4 1081.7,431.1 1081.3,431.9 1080.9,432.6 1080.4,433.2 1079.9,433.9 1079.5,434.5 1078.9,435.0 1078.4,435.5 1077.9,436.0 1077.3,436.4 1076.7,436.8 1076.1,437.2 1075.4,437.5" fill="none" stroke="#101090" stroke-width="10" stroke-opacity="0.85" stroke-dasharray="4 4"/>
<polygon points="1014.5,365.1 1037.1,357.1 1047.2,358.4 1055.5,366.7 1062.2,377.6 1064.7,392.7 1077.3,390.2 1090.0,383.5 1090.0,389.3 1047.2,409.0 1017.9,370.9" fill="#0d0d0d"/>
<polygon points="959.3,366.7 971.8,361.3 983.6,364.2 1000.3,368.4 1007.8,385.1 1010.3,395.2 1008.7,427.0 1010.3,432.0 1008.7,434.5 946.7,439.5 937.5,433.7 936.7,419.5 970.2,386.0 963.5,383.5 960.1,375.1" fill="#131313"/>
<polygon points="937.5,419.5 970.2,386.0 976.9,389.3 945.1,423.6" fill="#1d1d1d"/>
<polygon points="945.1,423.6 1005.3,399.4 1007.8,407.7 957.6,432.4 946.7,433.7" fill="#191919"/>
<polygon points="936.7,419.5 945.1,423.6 946.7,439.5 937.5,433.7" fill="#0e0e0e"/>
<polygon points="1007.0,367.6 1014.5,365.1 1017.9,370.9 1055.5,419.5 1056.4,433.7 1047.2,440.4 1037.9,433.7 1013.7,423.6 1010.3,433.7 1008.2,433.7 1008.7,425.3 1009.9,395.2 1007.7,385.1" fill="#151515"/>
<polygon points="1017.9,370.9 1055.5,419.5 1053.8,421.1 1015.4,375.1" fill="#262626"/>
<polyline points="1012.8,427.6 1022.1,432.6 1036.3,435.1" fill="none" stroke="#12a818" stroke-width="9" stroke-opacity="0.85" stroke-linecap="butt"/>
<polyline points="1058.9,345.2 1070.6,360.3 1079.0,377.0 1084.9,397.1" fill="none" stroke="#2a18b0" stroke-width="9" stroke-opacity="0.7" stroke-linecap="butt"/>
<polygon points="1043.0,304.2 1056.4,321.5 1050.5,323.1 1051.4,338.5 1037.2,339.9 1038.0,323.5 1031.3,321.0" fill="#c8141e" fill-opacity="0.85"/>
<polygon points="1104.1,420.5 1095.7,403.8 1084.9,401.3 1075.6,407.2 1079.0,417.2 1089.0,422.2" fill="#14c81e" fill-opacity="0.9"/>
<polygon points="995.3,346.1 1008.7,342.7 1008.7,356.9 1000.3,358.6" fill="#14c81e" fill-opacity="0.85"/>
<polygon points="989.4,410.0 996.9,408.4 997.8,416.7 991.9,416.7" fill="#10106a" fill-opacity="0.9"/>
<polygon points="1046.3,441.0 1055.5,436.8 1062.2,440.2 1060.5,445.2 1055.5,448.5 1050.5,445.2" fill="#b0a0a0" fill-opacity="0.95"/>
<polygon points="1046.3,441.0 1055.5,436.8 1057.2,438.5 1048.8,442.7" fill="#c01018" fill-opacity="0.9"/>
</svg></div>
</body>
</html>
